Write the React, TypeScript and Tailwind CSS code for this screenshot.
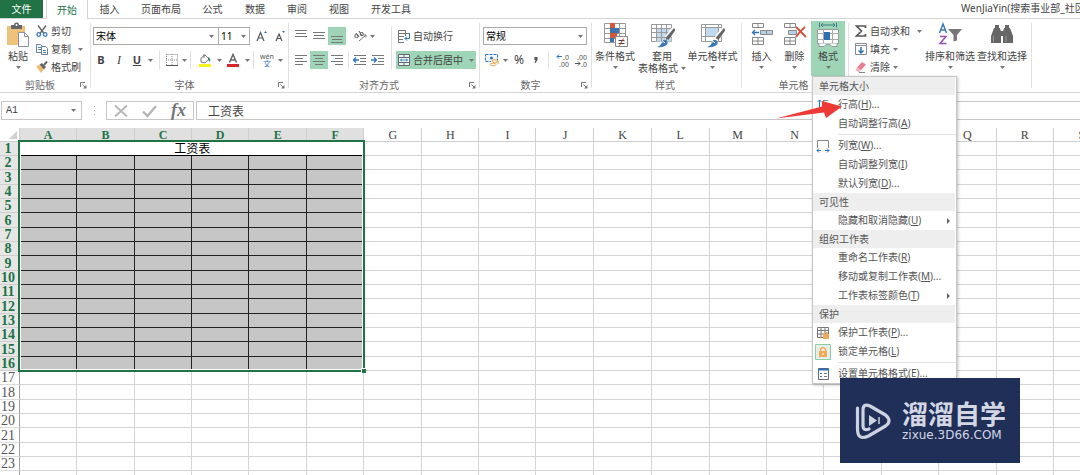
import React from "react";

const ui = "font-['Noto_Sans','Noto_Sans_CJK_SC',sans-serif]";
const serif = "font-['Liberation_Serif','Noto_Sans_CJK_SC',serif]";

function Caret({ className = "" }: { className?: string }) {
  return (
    <svg viewBox="0 0 5 3" className={`h-[3px] w-[5px] shrink-0 ${className}`} fill="#777" aria-hidden="true">
      <path d="M0 0h5L2.500 3z" />
    </svg>
  );
}

function CaretButton({ label, className = "w-[6px]" }: { label: string; className?: string }) {
  return (
    <button aria-label={label} className={`flex h-[18px] items-center justify-center ${className}`}>
      <Caret />
    </button>
  );
}

function Sep({ className = "" }: { className?: string }) {
  return <span className={`h-[18px] w-px shrink-0 bg-[#e1e1e1] ${className}`} />;
}

function Launcher() {
  return (
    <svg viewBox="0 0 7 7" className="h-[7px] w-[7px]" fill="none" stroke="#777" aria-hidden="true">
      <path d="M.5 5V.5H5M2.500 2.500L5 5" />
      <path d="M6.500 3v3.500H3z" fill="#777" stroke="none" />
    </svg>
  );
}

function Group({
  label,
  width,
  launcher,
  children,
}: {
  label?: string;
  width: string;
  launcher?: boolean;
  children: React.ReactNode;
}) {
  return (
    <section aria-label={label} className={`flex shrink-0 ${width}`}>
      <div className="flex min-w-0 flex-1 flex-col">
        <div className="flex h-[60px]">{children}</div>
        <div className="flex h-[14px] items-center justify-center pr-[3px] text-[10px] leading-[14px] text-[#666]">
          <span className={launcher ? "flex-1 text-center" : ""}>{label}</span>
          {launcher && (
            <button aria-label="更多设置">
              <Launcher />
            </button>
          )}
        </div>
      </div>
      <span className="my-[4px] w-px bg-[#e1e1e1]" />
    </section>
  );
}

function SmallButton({
  label,
  width = "w-[18px]",
  active,
  children,
}: {
  label: string;
  width?: string;
  active?: boolean;
  children: React.ReactNode;
}) {
  return (
    <button
      aria-label={label}
      className={`flex h-[18px] shrink-0 items-center justify-center ${width} ${active ? "bg-[#9fd5b7]" : ""}`}
    >
      {children}
    </button>
  );
}

function IconText({ icon, text, caret }: { icon: React.ReactNode; text: string; caret?: string }) {
  return (
    <button className="flex h-[18px] items-center gap-[3px] whitespace-nowrap">
      {icon}
      <span>{text}</span>
      {caret && <Caret className={caret} />}
    </button>
  );
}

function BigButton({
  icon,
  lines,
  width,
  active,
}: {
  icon: React.ReactNode;
  lines: string[];
  width: string;
  active?: boolean;
}) {
  return (
    <button
      className={`flex shrink-0 flex-col items-center whitespace-nowrap leading-[12px] ${width} ${
        active ? "bg-[#9fd5b7] pt-px" : "pt-[3px]"
      }`}
    >
      {icon}
      <span className="mt-[2px]">{lines[0]}</span>
      {lines[1] ? (
        <span className="flex items-center gap-[3px]">
          {lines[1]}
          <Caret />
        </span>
      ) : (
        <Caret className="mt-[4px]" />
      )}
    </button>
  );
}

function Lines({ rows }: { rows: [number, number, number][] }) {
  return (
    <svg viewBox="0 0 12 14" className="h-[14px] w-[12px]" stroke="#777" aria-hidden="true">
      {rows.map(([x1, x2, y]) => (
        <path key={y} d={`M${x1} ${y}H${x2}`} />
      ))}
    </svg>
  );
}

/* ---------- icons ---------- */

const PasteIcon = (
  <svg viewBox="0 0 24 26" className="h-[26px] w-[24px]" aria-hidden="true">
    <path d="M1 4h18v19H1z" fill="#eec27b" />
    <path d="M5 3h3a2.500 2.500 0 0 1 5 0h3v4H5z" fill="#666" />
    <circle cx="10.500" cy="3" r="1" fill="#fff" />
    <path d="M12.500 10.500h6l4 4v10h-10z" fill="#fff" stroke="#8b93a3" />
    <path d="M18.500 10.500v4h4" fill="none" stroke="#8b93a3" />
  </svg>
);
const CutIcon = (
  <svg viewBox="0 0 12 12" className="h-[12px] w-[12px]" fill="none" aria-hidden="true">
    <path d="M2 .5l6 8M10 .5l-6 8" stroke="#666" strokeWidth="1.400" />
    <circle cx="2.800" cy="9.500" r="1.800" stroke="#3d79b5" strokeWidth="1.300" />
    <circle cx="9.200" cy="9.500" r="1.800" stroke="#3d79b5" strokeWidth="1.300" />
  </svg>
);
const CopyIcon = (
  <svg viewBox="0 0 12 12" className="h-[12px] w-[12px]" fill="#fff" stroke="#6b7f96" aria-hidden="true">
    <path d="M.5 1.500h4l2 2v6h-6z" />
    <path d="M2 4.500h3M2 6.500h3" stroke="#4a84c0" />
    <path d="M5.500 3.500h4l2 2v6h-6z" />
    <path d="M7 7.500h3M7 9.500h3" stroke="#4a84c0" />
  </svg>
);
const BrushIcon = (
  <svg viewBox="0 0 12 12" className="h-[12px] w-[12px]" aria-hidden="true">
    <path d="M0 5l4-1 4 4-3 4z" fill="#eebc6c" />
    <path d="M3.500 3.500L6 2l4 4-2 2.500z" fill="#666" />
    <path d="M8 4l3-3.500" stroke="#666" strokeWidth="2" />
  </svg>
);
const BordersIcon = (
  <svg viewBox="0 0 12 12" className="h-[12px] w-[12px]" fill="none" stroke="#888" aria-hidden="true">
    <path d="M.5.5h11v11M.5 0v11M6 0v11M0 6h12" strokeDasharray="1 1" />
    <path d="M0 11.500h12" stroke="#555" />
  </svg>
);
const FillIcon = (
  <svg viewBox="0 0 14 14" className="h-[14px] w-[14px]" aria-hidden="true">
    <path d="M3 5l4-3 4 4-4 4-4-1z" fill="#fff" stroke="#777" />
    <path d="M6 1v4" stroke="#777" />
    <path d="M10 4q3 1 2 5l-2-2z" fill="#3f8060" />
    <path d="M1 11h12v3H1z" fill="#f9f31c" />
  </svg>
);
const FontColorIcon = (
  <svg viewBox="0 0 14 14" className="h-[14px] w-[14px]" fill="none" aria-hidden="true">
    <path d="M3.500 9.500L7 1.500l3.500 8M5 7h4" stroke="#666" strokeWidth="1.500" />
    <path d="M1 11h12v3H1z" fill="#d9262c" />
  </svg>
);
function GrowIcon({ up }: { up: boolean }) {
  return (
    <svg viewBox="0 0 12 12" className="h-[12px] w-[12px]" fill="none" stroke="#555" aria-hidden="true">
      {up ? (
        <path d="M1 11L4.500 2.500L8 11M2.300 8h4.500" strokeWidth="1.200" />
      ) : (
        <path d="M2 11L5 4l3 7M3 8.500h4" strokeWidth="1.200" />
      )}
      <path d={up ? "M8 3l1.500-2L11 3z" : "M8 1h3L9.500 3z"} fill="#3d6fa5" stroke="none" />
    </svg>
  );
}
const PinyinIcon = (
  <svg viewBox="0 0 14 14" className="h-[14px] w-[14px]" aria-hidden="true">
    <text x="7" y="5.500" fontSize="7" textAnchor="middle" fill="#555">wén</text>
    <text x="7" y="13.500" fontSize="8" textAnchor="middle" fill="#2f75b5">文</text>
  </svg>
);
const OrientIcon = (
  <svg viewBox="0 0 14 14" className="h-[14px] w-[14px]" fill="none" stroke="#555" aria-hidden="true">
    <circle cx="3.500" cy="7" r="1.700" />
    <path d="M3 4l3 4M6 2l3 5" />
    <circle cx="8.700" cy="5" r="1.600" />
    <path d="M6 12l7-6M10.500 6H13v2.500" stroke="#777" />
  </svg>
);
function IndentIcon({ right }: { right: boolean }) {
  return (
    <svg viewBox="0 0 14 12" className="h-[12px] w-[14px]" fill="none" stroke="#777" aria-hidden="true">
      <path d="M1 1.500h12M7 4.500h6M7 7.500h6M1 10.500h12" />
      <path d={right ? "M0 6h5M3 3.500L5.500 6L3 8.500" : "M6 6H1M3 3.500L.500 6L3 8.500"} stroke="#2f75b5" strokeWidth="1.300" />
    </svg>
  );
}
const WrapIcon = (
  <svg viewBox="0 0 13 13" className="h-[13px] w-[13px]" fill="none" stroke="#777" aria-hidden="true">
    <path d="M1.500 0v13M8.500 0v6M1 .5h8M1 3.500h11M1 6.500h6M1 9.500h5M1 12.500h6" />
    <path d="M12.500 3v5.500H8M10 6.500l-2 2l2 2" stroke="#2f75b5" />
  </svg>
);
const MergeIcon = (
  <svg viewBox="0 0 12 12" className="h-[12px] w-[12px]" fill="none" stroke="#667" aria-hidden="true">
    <path d="M.5.5h11v11H.5zM.5 3.500h11M.5 8.500h11M6 .5v3M6 8.500v3" fill="#e9f6ee" />
    <path d="M2.500 6h7M4 4.800L2.500 6L4 7.200M8 4.800L9.500 6L8 7.200" stroke="#2f75b5" strokeWidth=".8" />
  </svg>
);
const CurrencyIcon = (
  <svg viewBox="0 0 14 14" className="h-[14px] w-[14px]" fill="none" aria-hidden="true">
    <path d="M.5 1.500h12v7H.5z" fill="#f2f7fc" stroke="#2f75b5" strokeDasharray="3 1" />
    <circle cx="6.500" cy="5" r="1.500" fill="#2f75b5" />
    <path d="M6 8h6v4.500H6z" fill="#fff" />
    <ellipse cx="10" cy="8" rx="3" ry="1.300" stroke="#e5a74e" />
    <ellipse cx="8" cy="11.500" rx="3" ry="1.300" stroke="#e5a74e" />
    <path d="M13 8v3" stroke="#e5a74e" />
  </svg>
);
function DecimalIcon({ more }: { more: boolean }) {
  return (
    <svg viewBox="0 0 14 14" className="h-[14px] w-[14px]" fill="none" aria-hidden="true">
      <path
        d={more ? "M1 3.500h5M3 1.500l-2 2l2 2" : "M1 10.500h5M4 8.500l2 2l-2 2"}
        stroke={more ? "#2f75b5" : "#555"}
      />
      <text x="13" y="6.500" fontSize="7" textAnchor="end" fill="#555">{more ? ".0" : ".00"}</text>
      <text x="13" y="13.500" fontSize="7" textAnchor="end" fill="#555">{more ? ".00" : ".0"}</text>
    </svg>
  );
}
const CondIcon = (
  <svg viewBox="0 0 25 26" className="h-[26px] w-[25px]" fill="none" aria-hidden="true">
    <path d="M1.500 1.500h21v19h-21zM1.500 6.500h21M1.500 11.500h21M1.500 16.500h21M7.500 1v19M16.500 1v19" stroke="#999" fill="#fff" />
    <path d="M7 1h5v5H7zM7 11h7v5H7z" fill="#d8553b" />
    <path d="M7 6h9v5H7zM7 16h4v4H7z" fill="#3d73ad" />
    <path d="M12.500 14.500h12v10h-12z" fill="#fff" stroke="#888" />
    <path d="M15.500 18.500h6M15.500 21.500h6" stroke="#444" />
    <path d="M20.500 16.500l-4 7" stroke="#c0392b" />
  </svg>
);
function BrushTableIcon({ cell }: { cell?: boolean }) {
  return (
    <svg viewBox="0 0 25 26" className="h-[26px] w-[25px]" fill="none" aria-hidden="true">
      <path d="M1.500 2.500h20v17h-20z" fill="#fff" stroke="#999" />
      {cell ? <path d="M5.500 5.500h13v9h-13z" fill="#c2d9ee" /> : <path d="M6.500 6.500h15v13h-15z" fill="#c2d9ee" />}
      <path
        d={cell ? "M1.500 5.500h20M1.500 14.500h20M5.500 2v17M18.500 2v17" : "M1.500 6.500h20M1.500 10.500h20M1.500 15.500h20M6.500 2v17M11.500 2v17M16.500 2v17"}
        stroke="#999"
      />
      <path d="M24 7l-7 9" stroke="#fff" strokeWidth="5" />
      <path d="M24 6l1.500 2l-7 10l-3-2z" fill="#666" />
      <path d="M7 25q4-1 5-5q2-4 5-1q2 3-2 5q-4 2-8 1z" fill="#3d79b5" />
      <path d="M12 20q2-1 3 1" stroke="#fff" />
    </svg>
  );
}
const InsertIcon = (
  <svg viewBox="0 0 22 26" className="h-[26px] w-[22px]" fill="#fff" stroke="#888" aria-hidden="true">
    <path d="M1.500 1.500h11v4h-11zM7 1.500v4M1.500 15.500h11v7h-11zM7 15.500v7M1.500 19h11" />
    <path d="M9.500 8.500h12v4h-12zM15.500 8.500v4" fill="#b9d1e8" />
    <path d="M8 10.500H1.500M4 8l-2.500 2.500L4 13" fill="none" stroke="#2f75b5" strokeWidth="1.300" />
  </svg>
);
const DeleteIcon = (
  <svg viewBox="0 0 24 26" className="h-[26px] w-[24px]" fill="#fff" stroke="#888" aria-hidden="true">
    <path d="M1.500 1.500h11v4h-11zM7 1.500v4M1.500 15.500h11v7h-11zM7 15.500v7M1.500 19h11" />
    <path d="M5.500 8.500h8v4h-8z" fill="#b9d1e8" />
    <path d="M13 5l10 10M22 5q-5 4-9 10" fill="none" stroke="#d2523a" strokeWidth="1.800" />
  </svg>
);
const FormatIcon = (
  <svg viewBox="0 0 24 26" className="h-[26px] w-[24px]" fill="none" aria-hidden="true">
    <path d="M3.500.500v5M20.500.500v5M5 3h14M7 1L5 3l2 2M17 1l2 2l-2 2" stroke="#3b7c8f" />
    <path d="M1.500 7.500h21v14h-21z" fill="#fff" stroke="#999" />
    <path d="M1.500 11.500h21M1.500 17.500h21M7.500 7.500v14M16.500 7.500v14" stroke="#aaa" />
    <path d="M8 10h6v8H8z" fill="#2f6fb0" />
    <path d="M3 21.500v3h5l2-2h4l2 2h5v-3" fill="#fff" stroke="#999" />
  </svg>
);
const SigmaIcon = (
  <svg viewBox="0 0 12 12" className="h-[12px] w-[12px]" fill="none" stroke="#555" strokeWidth="1.700" aria-hidden="true">
    <path d="M10.500 3V1H1.500l5 5l-5 5h9V9" />
  </svg>
);
const FillDownIcon = (
  <svg viewBox="0 0 12 12" className="h-[12px] w-[12px]" fill="none" aria-hidden="true">
    <path d="M.5.500h11v11H.5zM.5 2.500h11" stroke="#889" />
    <path d="M6 4v6M3.500 7.500L6 10l2.500-2.500" stroke="#2f75b5" strokeWidth="1.500" />
  </svg>
);
const EraserIcon = (
  <svg viewBox="0 0 12 12" className="h-[12px] w-[12px]" aria-hidden="true">
    <path d="M7 1l4 2.500L6 9L2 6.500z" fill="#e8808f" />
    <path d="M2 6.500L6 9l-2 2.500L.500 9z" fill="#eeb4bd" />
    <path d="M4 11.500h6" stroke="#888" />
  </svg>
);
const SortIcon = (
  <svg viewBox="0 0 24 26" className="h-[26px] w-[24px]" fill="none" aria-hidden="true">
    <path d="M1.500 11L5 2l3.500 9M2.700 8h4.600" stroke="#3d79b5" strokeWidth="1.500" />
    <path d="M2 14.500h6l-6 7h6.500" stroke="#9b4fb0" strokeWidth="1.500" />
    <path d="M10 7h14l-5 6v5.500l-3.500 1V13z" fill="#777" />
  </svg>
);
const FindIcon = (
  <svg viewBox="0 0 24 26" className="h-[26px] w-[24px]" fill="#666" aria-hidden="true">
    <path d="M5 3h4v3h1l1 4v11H1v-7L4 6h1zM15 3h4v3h1l3 8v7H13V10l1-4h1z" />
    <path d="M10 9h4v5h-4z" />
    <path d="M3.500 14v6M16 14v6" stroke="#999" />
  </svg>
);

/* ---------- format menu ---------- */

type MenuEntry =
  | { kind: "header"; text: string }
  | { kind: "sep" }
  | { kind: "item"; text: string; accel: string; tail?: string; icon?: React.ReactNode; sub?: boolean };

const menuEntries: MenuEntry[] = [
  { kind: "header", text: "单元格大小" },
  {
    kind: "item",
    text: "行高",
    accel: "H",
    tail: "...",
    icon: (
      <svg viewBox="0 0 14 14" className="h-[14px] w-[14px]" fill="none" aria-hidden="true">
        <path d="M3.500 2v10M1.500 4l2-2l2 2M1.500 10l2 2l2-2" stroke="#2f75b5" />
        <path d="M7 2.500h5M7 11.500h5M7.500 2v10" stroke="#888" />
      </svg>
    ),
  },
  { kind: "item", text: "自动调整行高", accel: "A" },
  { kind: "sep" },
  {
    kind: "item",
    text: "列宽",
    accel: "W",
    tail: "...",
    icon: (
      <svg viewBox="0 0 14 14" className="h-[14px] w-[14px]" fill="none" aria-hidden="true">
        <path d="M1.500 9V1.500h11V9" stroke="#888" />
        <path d="M1 11.500h4M9 11.500h4M3 9.500l-2 2l2 2M11 9.500l2 2l-2 2" stroke="#2f75b5" />
      </svg>
    ),
  },
  { kind: "item", text: "自动调整列宽", accel: "I" },
  { kind: "item", text: "默认列宽", accel: "D", tail: "..." },
  { kind: "header", text: "可见性" },
  { kind: "item", text: "隐藏和取消隐藏", accel: "U", sub: true },
  { kind: "header", text: "组织工作表" },
  { kind: "item", text: "重命名工作表", accel: "R" },
  { kind: "item", text: "移动或复制工作表", accel: "M", tail: "..." },
  { kind: "item", text: "工作表标签颜色", accel: "T", sub: true },
  { kind: "header", text: "保护" },
  {
    kind: "item",
    text: "保护工作表",
    accel: "P",
    tail: "...",
    icon: (
      <svg viewBox="0 0 14 14" className="h-[14px] w-[14px]" fill="none" aria-hidden="true">
        <path d="M1.500 1.500h11v10h-11zM1.500 4.500h11M1.500 8h11M5 1.500v10M9 1.500v10" stroke="#777" />
        <path d="M7 8h6v5H7z" fill="#f0a95a" />
        <path d="M8.500 8V6.500h3V8" stroke="#f0a95a" />
      </svg>
    ),
  },
  {
    kind: "item",
    text: "锁定单元格",
    accel: "L",
    icon: (
      <svg viewBox="0 0 16 16" className="h-[16px] w-[16px] shrink-0" fill="none" aria-hidden="true">
        <path d="M.5.5h15v15H.5z" fill="#e3f0e8" stroke="#8fcbaa" />
        <path d="M4 7h8v6H4z" fill="#f3a95c" />
        <path d="M5.500 7V5q2.500-3 5 0v2" stroke="#f3a95c" strokeWidth="1.400" />
        <path d="M8 9v2" stroke="#fff" />
      </svg>
    ),
  },
  { kind: "sep" },
  {
    kind: "item",
    text: "设置单元格格式",
    accel: "E",
    tail: "...",
    icon: (
      <svg viewBox="0 0 14 14" className="h-[14px] w-[14px]" fill="none" aria-hidden="true">
        <path d="M2.500 1.500h10v11h-10z" fill="#fff" stroke="#667" />
        <path d="M2 2.500h11" stroke="#2f6fb0" strokeWidth="2" />
        <path d="M4 6.500h2M4 9.500h2" stroke="#2f75b5" />
        <path d="M8 6.500h3M8 9.500h3" stroke="#777" />
      </svg>
    ),
  },
];

function FormatMenu() {
  return (
    <div
      role="menu"
      aria-label="格式"
      className="absolute left-px top-full z-20 w-[145px] border border-[#c6c6c6] bg-white text-[10px] text-[#555] shadow-[1px_1px_3px_rgba(0,0,0,0.250)]"
    >
      {menuEntries.map((e, i) => {
        if (e.kind === "header")
          return (
            <div key={i} className="mr-px h-[18px] bg-[#eee] pl-[6px] leading-[18px]">
              {e.text}
            </div>
          );
        if (e.kind === "sep") return <div key={i} className="my-px ml-[25px] h-px bg-[#e1e1e1]" />;
        return (
          <button key={i} role="menuitem" className="flex h-[19px] w-full items-center pr-[6px] text-left leading-[19px]">
            <span className="flex w-[25px] shrink-0 items-center justify-center pr-[5px]">{e.icon}</span>
            <span className="flex-1 whitespace-nowrap">
              {e.text}(<u>{e.accel}</u>){e.tail}
            </span>
            {e.sub && (
              <svg viewBox="0 0 3 6" className="h-[6px] w-[3px]" fill="#666" aria-hidden="true">
                <path d="M0 0l3 3l-3 3z" />
              </svg>
            )}
          </button>
        );
      })}
      <svg
        viewBox="0 0 70 20"
        className="absolute left-[-38px] top-[24px] h-[20px] w-[70px]"
        fill="#ee3a36"
        aria-hidden="true"
      >
        <path d="M1 17.500L47 5.500V0L67 5.500L51 17L49 11.500z" />
      </svg>
    </div>
  );
}

/* ---------- ribbon ---------- */

const tabs = [
  { name: "插入", width: "w-[43px]" },
  { name: "页面布局", width: "w-[60px]" },
  { name: "公式", width: "w-[43px]" },
  { name: "数据", width: "w-[42px]" },
  { name: "审阅", width: "w-[42px]" },
  { name: "视图", width: "w-[42px]" },
  { name: "开发工具", width: "w-[62px]" },
];

function TabBar() {
  return (
    <nav className="flex h-[18px] text-[10px] leading-[16px] text-[#444]">
      <button className="w-[43px] shrink-0 bg-[#217346] text-white">文件</button>
      <button className="z-10 -mb-px ml-[3px] w-[42px] shrink-0 border-x border-[#d5d5d5] bg-white text-[#217346]">
        开始
      </button>
      {tabs.map((t) => (
        <button key={t.name} className={`shrink-0 ${t.width}`}>
          {t.name}
        </button>
      ))}
      <span className="ml-auto w-[119px] shrink-0 overflow-hidden whitespace-nowrap">WenJiaYin(搜索事业部_社区</span>
    </nav>
  );
}

function Ribbon() {
  return (
    <div className="flex h-[75px] border-y border-[#d5d5d5] text-[10px] text-[#444]">
      <Group label="剪贴板" width="w-[91px]" launcher>
        <BigButton icon={PasteIcon} lines={["粘贴"]} width="w-[36px]" />
        <div className="flex flex-col pt-[3px]">
          <IconText icon={CutIcon} text="剪切" />
          <IconText icon={CopyIcon} text="复制" caret="ml-[4px]" />
          <IconText icon={BrushIcon} text="格式刷" />
        </div>
      </Group>

      <Group label="字体" width="w-[198px]" launcher>
        <div className="flex flex-1 flex-col gap-[6px] pl-[2px] pt-[8px]">
          <div className="flex h-[18px] items-center">
            <label className="flex h-[18px] w-[126px] items-center border border-[#ababab] pr-[4px]">
              <select aria-label="字体名称" className="h-full flex-1 appearance-none bg-white pl-[2px] leading-[16px] text-black">
                <option>宋体</option>
              </select>
              <Caret />
            </label>
            <label className="-ml-px flex h-[18px] w-[32px] items-center border border-[#ababab] pr-[3px]">
              <select aria-label="字号" className="h-full w-[20px] flex-1 appearance-none bg-white pl-[2px] leading-[16px] text-black">
                <option>11</option>
              </select>
              <Caret />
            </label>
            <SmallButton label="增大字号" width="ml-[3px] w-[18px]">
              <GrowIcon up />
            </SmallButton>
            <SmallButton label="减小字号">
              <GrowIcon up={false} />
            </SmallButton>
          </div>
          <div className="flex h-[18px] items-center pl-px text-[11px]">
            <button className="w-[14px] font-bold">B</button>
            <button className="w-[22px] font-['Liberation_Serif',serif] text-[12px] italic">I</button>
            <button className="w-[14px] font-bold underline">U</button>
            <CaretButton label="下划线选项" className="w-[12px]" />
            <Sep className="mx-[3px]" />
            <SmallButton label="边框">{BordersIcon}</SmallButton>
            <CaretButton label="边框选项" />
            <Sep className="mx-[3px]" />
            <SmallButton label="填充颜色" width="w-[22px]">{FillIcon}</SmallButton>
            <CaretButton label="填充颜色选项" />
            <SmallButton label="字体颜色" width="w-[22px]">{FontColorIcon}</SmallButton>
            <CaretButton label="字体颜色选项" />
            <Sep className="mx-[3px]" />
            <SmallButton label="拼音" width="w-[20px]">{PinyinIcon}</SmallButton>
            <CaretButton label="拼音选项" />
          </div>
        </div>
      </Group>

      <Group label="对齐方式" width="w-[191px]" launcher>
        <div className="flex flex-1 gap-[4px] pl-[3px] pt-[8px]">
          <div className="flex flex-col gap-[6px]">
            <div className="flex">
              <SmallButton label="顶端对齐"><Lines rows={[[0, 12, 1.5], [1, 11, 4.5], [0, 12, 7.5]]} /></SmallButton>
              <SmallButton label="垂直居中"><Lines rows={[[0, 12, 3.5], [1, 11, 6.5], [0, 12, 9.5]]} /></SmallButton>
              <SmallButton label="底端对齐" active><Lines rows={[[0, 12, 7.5], [1, 11, 10.5], [0, 12, 13.5]]} /></SmallButton>
              <span className="w-[5px]" />
              <SmallButton label="方向">{OrientIcon}</SmallButton>
              <CaretButton label="方向选项" />
            </div>
            <div className="flex">
              <SmallButton label="左对齐"><Lines rows={[[0, 12, 2.5], [0, 8, 5.5], [0, 12, 8.5], [0, 8, 11.5]]} /></SmallButton>
              <SmallButton label="居中" active><Lines rows={[[0, 12, 2.5], [2, 10, 5.5], [0, 12, 8.5], [2, 10, 11.5]]} /></SmallButton>
              <SmallButton label="右对齐"><Lines rows={[[0, 12, 2.5], [4, 12, 5.5], [0, 12, 8.5], [4, 12, 11.5]]} /></SmallButton>
              <Sep className="mx-[2px]" />
              <SmallButton label="减少缩进量"><IndentIcon right={false} /></SmallButton>
              <SmallButton label="增加缩进量"><IndentIcon right /></SmallButton>
            </div>
          </div>
          <span className="h-[42px] w-px bg-[#e1e1e1]" />
          <div className="flex flex-col gap-[6px]">
            <button className="flex h-[18px] items-center gap-[3px] whitespace-nowrap pl-px">
              {WrapIcon}自动换行
            </button>
            <button className="flex h-[18px] w-[80px] items-center gap-[3px] whitespace-nowrap bg-[#9fd5b7] pl-[2px]">
              {MergeIcon}合并后居中
              <Caret className="ml-[3px]" />
            </button>
          </div>
        </div>
      </Group>

      <Group label="数字" width="w-[112px]" launcher>
        <div className="flex flex-1 flex-col gap-[6px] pl-[3px] pt-[8px]">
          <label className="flex h-[18px] w-[104px] items-center border border-[#ababab] pr-[3px]">
            <select aria-label="数字格式" className="h-full flex-1 appearance-none bg-white pl-[2px] leading-[16px] text-black">
              <option>常规</option>
            </select>
            <Caret />
          </label>
          <div className="flex items-center">
            <SmallButton label="会计数字格式">{CurrencyIcon}</SmallButton>
            <CaretButton label="会计数字格式选项" className="w-[8px]" />
            <button className="w-[20px] text-[12px] leading-[18px]">%</button>
            <button aria-label="千位分隔样式" className="flex w-[14px] justify-center">
              <svg viewBox="0 0 4 6" className="h-[6px] w-[4px]" fill="#555" aria-hidden="true">
                <path d="M.500 0h3v3L1.500 6H.500L1.500 3h-1z" />
              </svg>
            </button>
            <Sep className="mx-[5px]" />
            <SmallButton label="增加小数位数"><DecimalIcon more /></SmallButton>
            <SmallButton label="减少小数位数"><DecimalIcon more={false} /></SmallButton>
          </div>
        </div>
      </Group>

      <Group label="样式" width="w-[150px]">
        <BigButton icon={CondIcon} lines={["条件格式"]} width="w-[46px]" />
        <BigButton icon={<BrushTableIcon />} lines={["套用", "表格格式"]} width="w-[48px]" />
        <BigButton icon={<BrushTableIcon cell />} lines={["单元格样式"]} width="w-[53px]" />
      </Group>

      <Group label="单元格" width="w-[107px]">
        <div className="flex pl-[3px]">
          <BigButton icon={InsertIcon} lines={["插入"]} width="w-[33px]" />
          <BigButton icon={DeleteIcon} lines={["删除"]} width="w-[33px]" />
          <div className="relative mt-[2px] flex h-[55px]">
            <BigButton icon={FormatIcon} lines={["格式"]} width="w-[34px]" active />
            <FormatMenu />
          </div>
        </div>
      </Group>

      <Group width="w-[183px]">
        <div className="flex w-[75px] flex-col pl-[6px] pt-[3px]">
          <IconText icon={SigmaIcon} text="自动求和" caret="ml-[4px]" />
          <IconText icon={FillDownIcon} text="填充" caret="ml-0" />
          <IconText icon={EraserIcon} text="清除" caret="ml-0" />
        </div>
        <BigButton icon={SortIcon} lines={["排序和筛选"]} width="w-[52px]" />
        <BigButton icon={FindIcon} lines={["查找和选择"]} width="w-[52px]" />
      </Group>
    </div>
  );
}

function FormulaBar() {
  return (
    <div className="flex h-[35px] items-center text-[#555]">
      <label className="ml-px flex h-[19px] w-[81px] items-center border border-[#c6c6c6] pr-[5px]">
        <input
          aria-label="名称框"
          defaultValue="A1"
          className="w-0 flex-1 pl-[4px] font-['Liberation_Mono',monospace] text-[10px] text-[#444] outline-none"
        />
        <Caret />
      </label>
      <svg viewBox="0 0 3 9" className="mx-[11px] h-[9px] w-[3px]" fill="#aaa" aria-hidden="true">
        <path d="M1 0h1v1H1zM1 4h1v1H1zM1 8h1v1H1z" />
      </svg>
      <div className="-ml-px flex h-[19px] w-[88px] items-center justify-between border border-[#c6c6c6] px-[7px]">
        <button aria-label="取消">
          <svg viewBox="0 0 14 14" className="h-[14px] w-[14px]" fill="none" stroke="#b5b5b5" strokeWidth="1.800" aria-hidden="true">
            <path d="M1 1.500l12 11M13 1.500L1 12.500" />
          </svg>
        </button>
        <button aria-label="输入">
          <svg viewBox="0 0 15 14" className="h-[14px] w-[15px]" fill="none" stroke="#b5b5b5" strokeWidth="2.400" aria-hidden="true">
            <path d="M1 7.500l4.500 4.500L14 2" />
          </svg>
        </button>
        <button
          aria-label="插入函数"
          className="font-['Liberation_Serif',serif] text-[18px] font-bold italic leading-[17px] text-[#777]"
        >
          fx
        </button>
      </div>
      <input
        aria-label="编辑栏"
        defaultValue="工资表"
        className={`ml-[2px] h-[19px] min-w-0 flex-1 border border-r-0 border-[#c6c6c6] pl-[11px] text-[12px] text-[#444] outline-none ${serif}`}
      />
    </div>
  );
}

/* ---------- sheet ---------- */

const columns = "ABCDEFGHIJKLMNOPQRS".split("");
const columnWidths = ["w-[57px]", "w-[58px]", "w-[57px]", "w-[57px]", "w-[58px]"];
const rowHeights = ["h-[14px]", "h-[14px]", "h-[15px]"];
const rows = Array.from({ length: 23 }, (_, i) => i + 1);
const selectedColumns = 6;
const selectedRows = 16;

function Sheet() {
  return (
    <div className={`relative min-h-0 flex-1 overflow-hidden ${serif}`}>
      <table className="w-[1111px] table-fixed border-separate border-spacing-0 text-center leading-[12px]">
        <colgroup>
          <col className="w-[20px]" />
          {columns.map((c, i) => (
            <col key={c} className={columnWidths[i % 5]} />
          ))}
        </colgroup>
        <thead>
          <tr className="h-[14px] text-[12px] leading-[11px]">
            <th className="border-b border-r border-[#cfcfcf] p-0">
              <svg viewBox="0 0 8 8" className="ml-auto mr-[2px] h-[8px] w-[8px]" fill="#d0d0d0" aria-hidden="true">
                <path d="M8 0v8H0z" />
              </svg>
            </th>
            {columns.map((c, i) => (
              <th
                key={c}
                scope="col"
                className={`border-b border-r border-[#cfcfcf] p-0 pt-[2px] ${
                  i < selectedColumns ? "bg-[#e0e0e0] font-bold text-[#217346]" : "font-normal text-[#444]"
                }`}
              >
                {c}
              </th>
            ))}
          </tr>
        </thead>
        <tbody>
          {rows.map((r) => (
            <tr key={r} className={rowHeights[(r - 1) % 3]}>
              <th
                scope="row"
                className={`border-b border-r p-0 pr-[3px] pt-px text-[14px] ${
                  r <= selectedRows
                    ? "border-b-[#cfcfcf] border-r-[#217346] bg-[#e6e6e6] font-bold text-[#217346]"
                    : "border-b-[#dcdcdc] border-r-[#a0a0a0] font-normal text-[#555]"
                }`}
              >
                {r}
              </th>
              {columns.map((c, i) => {
                if (r === 1 && i === 0)
                  return (
                    <td key={c} colSpan={selectedColumns} className="border-b border-black bg-white p-0 pt-px text-[12px] text-black">
                      工资表
                    </td>
                  );
                if (r === 1 && i < selectedColumns) return null;
                const selected = r <= selectedRows && i < selectedColumns;
                return (
                  <td
                    key={c}
                    className={`border-b border-r p-0 ${selected ? "border-[#222] bg-[#c6c6c6]" : "border-[#d4d4d4]"}`}
                  />
                );
              })}
            </tr>
          ))}
        </tbody>
        <tfoot>
          <tr className="h-[14px]">
            <td className="border-r border-[#a0a0a0] p-0" />
            {columns.map((c) => (
              <td key={c} className="border-r border-[#d4d4d4] p-0" />
            ))}
          </tr>
        </tfoot>
      </table>
      <div className="pointer-events-none absolute left-[18px] top-[12px] h-[232px] w-[347px] border-2 border-[#217346]">
        <div className="h-full border border-white" />
        <span className="absolute bottom-[-3px] right-[-3px] h-[5px] w-[5px] border-l border-t border-white bg-[#217346]" />
      </div>
    </div>
  );
}

function Brand() {
  return (
    <aside className="absolute bottom-[12px] right-[60px] z-30 flex h-[85px] w-[180px] items-center gap-[11px] bg-[#202f58] pl-[15px] text-[#d3d7e3]">
      <svg viewBox="0 0 36 38" className="h-[38px] w-[36px] shrink-0" fill="none" stroke="#cdd2e0" aria-hidden="true">
        <path d="M2.500 6v21q0 12 11 7l17-10q7-5 0-11L15 4Q8 1 8 8v16q0 5 6 3" strokeWidth="3.200" strokeLinecap="round" strokeLinejoin="round" />
        <path d="M14 13l8 5.500L14 24z" fill="#cdd2e0" stroke="none" />
        <path d="M24 15v7" strokeWidth="1.500" />
      </svg>
      <div className="flex flex-col whitespace-nowrap">
        <span className="text-[26px] font-bold leading-[28px]">溜溜自学</span>
        <span className="font-['DejaVu_Sans',sans-serif] text-[12px] leading-[14px]">zixue.3D66.COM</span>
      </div>
    </aside>
  );
}

export default function App() {
  return (
    <div className={`relative flex h-screen flex-col overflow-hidden bg-white ${ui}`}>
      <TabBar />
      <Ribbon />
      <FormulaBar />
      <Sheet />
      <Brand />
    </div>
  );
}
